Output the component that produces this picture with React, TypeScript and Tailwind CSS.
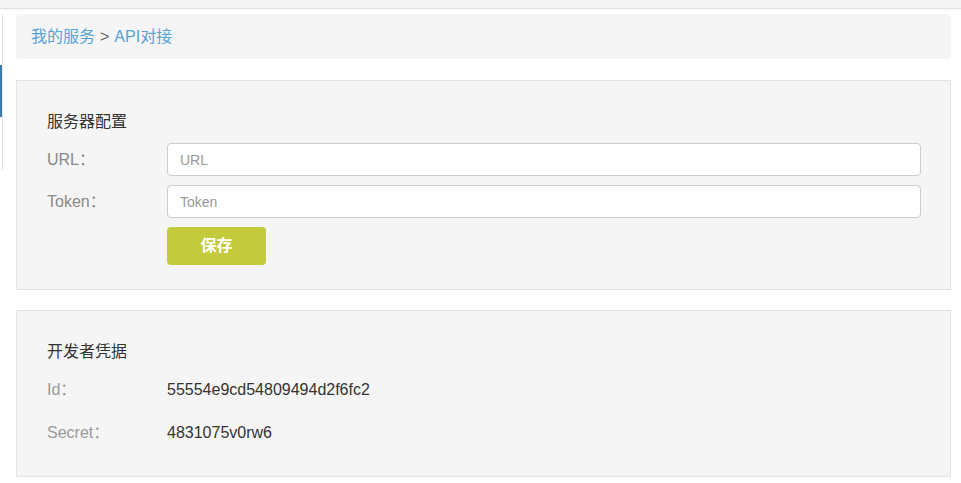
const font = 'font-["Liberation_Sans","Noto_Sans_CJK_SC",sans-serif]'

function Field({ label, placeholder }: { label: string; placeholder: string }) {
  return (
    <div className="flex items-center">
      <div className="w-[120px] text-[16px] text-[#888]">{label}</div>
      <input
        placeholder={placeholder}
        className="h-[33px] w-[754px] rounded-[4px] border border-[#ccc] bg-white px-[12px] text-[14px] text-[#555] placeholder:text-[#999] outline-none"
      />
    </div>
  )
}

function InfoRow({ label, value, className = '' }: { label: string; value: string; className?: string }) {
  return (
    <div className={`flex items-center leading-[20px] ${className}`}>
      <div className="w-[120px] text-[16px] text-[#999]">{label}</div>
      <div className="text-[16px] text-[#333]">{value}</div>
    </div>
  )
}

export default function App() {
  return (
    <div className={`${font} min-h-[483px] w-[961px] bg-white`}>
      {/* top bar */}
      <div className="h-[9px] border-b border-[#e3e1e1] bg-[#f5f4f4] shadow-[0_1px_2px_rgba(0,0,0,0.05)]" />

      <div className="flex">
        {/* sidebar edge */}
        <div className="mt-[5px] h-[156px] w-[3px] shrink-0 border-r border-[#e3e3e3] bg-white">
          <div className="mt-[51px] h-[52px] w-[2px] bg-[#3d78a6]" />
        </div>

        <div className="flex-1 pl-[13px] pr-[10px]">
          {/* breadcrumb */}
          <div className="mt-[5px] flex h-[45px] items-center rounded-[4px] bg-[#f5f5f5] pl-[15px] text-[16px]">
            <span className="text-[#55a3db]">我的服务</span>
            <span className="mx-[5px] text-[#666]">&gt;</span>
            <span className="text-[#55a3db]">API对接</span>
          </div>

          {/* server config */}
          <div className="mt-[21px] border border-[#e3e3e3] bg-[#f5f5f5] pb-[24px] pl-[30px] pt-[31px]">
            <div className="text-[16px] leading-[20px] text-[#333]">服务器配置</div>
            <div className="mt-[11px] flex flex-col gap-[9px]">
              <Field label="URL：" placeholder="URL" />
              <Field label="Token：" placeholder="Token" />
              <div className="pl-[120px]">
                <button className="h-[38px] w-[99px] rounded-[4px] bg-[#c3ca3c] text-[16px] font-bold text-white">
                  保存
                </button>
              </div>
            </div>
          </div>

          {/* credentials */}
          <div className="mt-[20px] border border-[#e3e3e3] bg-[#f5f5f5] pb-[33px] pl-[30px] pt-[31px]">
            <div className="text-[16px] leading-[20px] text-[#333]">开发者凭据</div>
            <InfoRow className="mt-[18px]" label="Id：" value="55554e9cd54809494d2f6fc2" />
            <InfoRow className="mt-[23px]" label="Secret：" value="4831075v0rw6" />
          </div>
        </div>
      </div>
    </div>
  )
}
